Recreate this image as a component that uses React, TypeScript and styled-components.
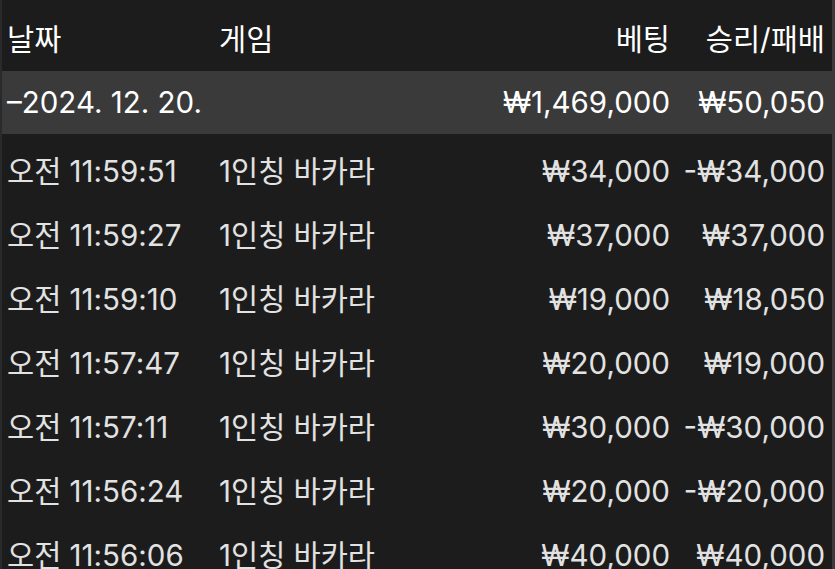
import React from "react";
import styled, { createGlobalStyle } from "styled-components";

const Global = createGlobalStyle`
  html, body { margin: 0; padding: 0; background: #1c1c1c; }
  body { width: 835px; height: 569px; overflow: hidden; }
`;

const Frame = styled.div`
  width: 835px;
  height: 569px;
  overflow: hidden;
  background: #1c1c1c;
  border-left: 2px solid #2a2a2a;
  border-right: 3px solid #3a3a3a;
  box-sizing: border-box;
  font-family: Inter, "Noto Sans CJK KR", sans-serif;
  font-size: 29.5px;
  -webkit-font-smoothing: antialiased;
`;

const Grid = styled.div`
  display: grid;
  grid-template-columns: 212px 1fr 200px 155px;
`;

const HeaderRow = styled.div`
  display: contents;
  color: #ffffff;
  & > div {
    height: 71px;
    line-height: 78px;
  }
`;

const GroupRow = styled.div`
  display: contents;
  color: #ffffff;
  & > div {
    height: 63px;
    background: #3a3a3a;
    line-height: 63px;
  }
`;

const Spacer = styled.div`
  grid-column: 1 / -1;
  height: 4px;
`;

const DataRow = styled.div`
  display: contents;
  color: #e2e2e2;
  & > div {
    height: 64px;
    line-height: 66px;
  }
`;

const Cell = styled.div<{ $align?: "left" | "right" }>`
  text-align: ${(p) => p.$align || "left"};
  white-space: nowrap;
  box-sizing: border-box;
  padding-left: ${(p) => (p.$align === "right" ? "0" : "5px")};
  padding-right: ${(p) => (p.$align === "right" ? "7px" : "0")};
`;

const rows = [
  ["오전 11:59:51", "1인칭 바카라", "₩34,000", "-₩34,000"],
  ["오전 11:59:27", "1인칭 바카라", "₩37,000", "₩37,000"],
  ["오전 11:59:10", "1인칭 바카라", "₩19,000", "₩18,050"],
  ["오전 11:57:47", "1인칭 바카라", "₩20,000", "₩19,000"],
  ["오전 11:57:11", "1인칭 바카라", "₩30,000", "-₩30,000"],
  ["오전 11:56:24", "1인칭 바카라", "₩20,000", "-₩20,000"],
  ["오전 11:56:06", "1인칭 바카라", "₩40,000", "₩40,000"],
];

export default function App() {
  return (
    <>
      <Global />
      <Frame>
        <Grid>
          <HeaderRow>
            <Cell>날짜</Cell>
            <Cell>게임</Cell>
            <Cell $align="right">베팅</Cell>
            <Cell $align="right">승리/패배</Cell>
          </HeaderRow>
          <GroupRow>
            <Cell>–2024. 12. 20.</Cell>
            <Cell />
            <Cell $align="right">₩1,469,000</Cell>
            <Cell $align="right">₩50,050</Cell>
          </GroupRow>
          <Spacer />
          {rows.map((r, i) => (
            <DataRow key={i}>
              <Cell>{r[0]}</Cell>
              <Cell>{r[1]}</Cell>
              <Cell $align="right">{r[2]}</Cell>
              <Cell $align="right">{r[3]}</Cell>
            </DataRow>
          ))}
        </Grid>
      </Frame>
    </>
  );
}
